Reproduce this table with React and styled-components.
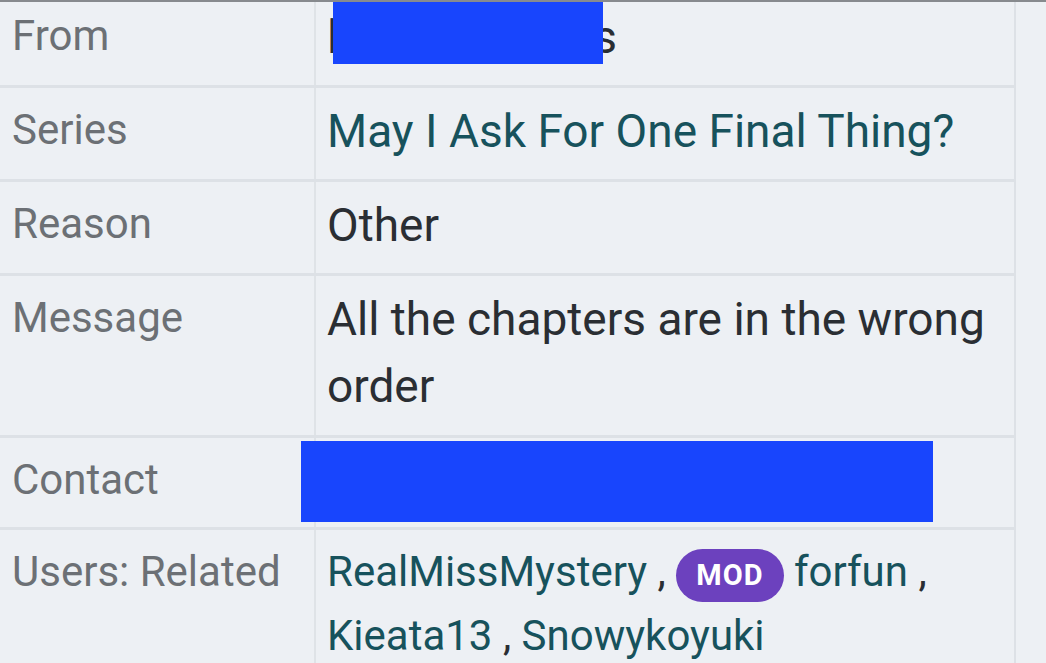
import styled, { createGlobalStyle } from "styled-components";

const GlobalStyle = createGlobalStyle`
  html, body {
    margin: 0;
    padding: 0;
    background: #edf0f4;
    overflow: hidden;
  }
  body {
    font-family: Roboto, "Liberation Sans", sans-serif;
  }
`;

const rows = [
  { label: "From", kind: "from" },
  { label: "Series", kind: "series" },
  { label: "Reason", kind: "text", text: "Other" },
  { label: "Message", kind: "text", text: "All the chapters are in the wrong order", tall: true },
  { label: "Contact", kind: "contact" },
  { label: "Users: Related", kind: "users", small: true },
];

const App = () => {
  const renderValue = (row) => {
    switch (row.kind) {
      case "from":
        return (
          <Hidden>
            l<Blank />s
            <Redact $left={6} $top={-14} $width={270} $height={68} />
          </Hidden>
        );
      case "series":
        return <Link>May I Ask For One Final Thing?</Link>;
      case "contact":
        return <Redact $left={-15} $top={3} $width={632} $height={81} />;
      case "users":
        return (
          <>
            <Link>RealMissMystery</Link> , <Badge>MOD</Badge> <Link>forfun</Link> ,{" "}
            <Link>Kieata13</Link> , <Link>Snowykoyuki</Link>
          </>
        );
      default:
        return row.text;
    }
  };

  return (
    <>
      <GlobalStyle />
      <Screen>
        <Table>
          <tbody>
            {rows.map((row) => (
              <Row key={row.label}>
                <Label>{row.label}</Label>
                <Value $tall={row.tall} $small={row.small}>
                  {renderValue(row)}
                </Value>
              </Row>
            ))}
          </tbody>
        </Table>
      </Screen>
    </>
  );
};

export default App;

const Screen = styled.div`
  border-top: 2px solid #878a8e;
  overflow: hidden;
  height: 661px;
`;

const Table = styled.table`
  width: 1016px;
  margin-top: -8px;
  border-collapse: collapse;
  border-right: 2px solid #dde1e6;
`;

const Row = styled.tr`
  border-bottom: 3px solid #dde1e6;
  &:last-child {
    border-bottom: none;
  }
`;

const Label = styled.td`
  width: 290px;
  padding: 10px 12px 15px;
  vertical-align: top;
  font-size: 42px;
  line-height: 64px;
  color: #6c7075;
  white-space: nowrap;
  border-right: 2px solid #dfe3e7;
`;

const Value = styled.td`
  position: relative;
  padding: 10px 14px 15px 11px;
  vertical-align: top;
  font-size: ${(p) => (p.$small ? 42 : 46)}px;
  line-height: ${(p) => (p.$small ? 64 : p.$tall ? 67 : 66)}px;
  color: #2a2e33;
`;

const Link = styled.span`
  color: #17525c;
`;

const Badge = styled.span`
  display: inline-block;
  background: #6c41be;
  color: #fff;
  font-weight: 700;
  font-size: 29px;
  letter-spacing: 1px;
  line-height: 53px;
  padding: 0 20px;
  border-radius: 27px;
  vertical-align: 1px;
`;

const Hidden = styled.span`
  position: relative;
  color: #2a2e33;
`;

const Blank = styled.span`
  display: inline-block;
  width: 255px;
`;

const Redact = styled.span`
  position: absolute;
  left: ${(p) => p.$left}px;
  top: ${(p) => p.$top}px;
  width: ${(p) => p.$width}px;
  height: ${(p) => p.$height}px;
  background: #1845fd;
`;
